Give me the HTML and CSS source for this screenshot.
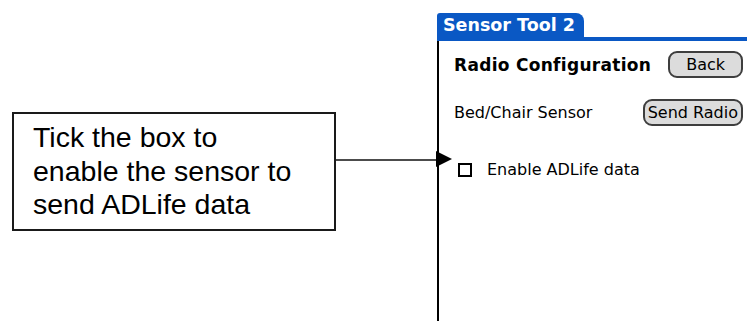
FILE: index.html
```html
<!DOCTYPE html>
<html lang="en">
<head>
  <meta charset="UTF-8">
  <meta name="viewport" content="width=device-width, initial-scale=1.0">
  <title>Sensor Tool 2 - Radio Configuration</title>
  <link rel="stylesheet" href="styles.css">
</head>
<body>

  <div class="scene">

    <!-- Callout -->
    <div class="callout">
      Tick the box to<br>
      enable the sensor to<br>
      send ADLife data
    </div>

    <!-- Arrow pointing at the checkbox -->
    <div class="pointer">
      <svg width="116" height="16" viewBox="0 0 116 16">
        <line x1="0" y1="9" x2="102" y2="9" stroke="#111" stroke-width="1.6"/>
        <polygon points="100,0 116,8 100,16" fill="#000"/>
      </svg>
    </div>

    <!-- Palm screen -->
    <div class="palm">
      <div class="titlebar">
        <span class="tab">Sensor Tool 2</span>
      </div>
      <div class="screen">
        <div class="row row-head">
          <span class="heading">Radio Configuration</span>
          <button type="button" class="palm-btn btn-back">Back</button>
        </div>
        <div class="row row-sensor">
          <span class="label">Bed/Chair Sensor</span>
          <button type="button" class="palm-btn btn-send">Send Radio</button>
        </div>
        <label class="check-row">
          <span class="box"></span>
          <span class="label">Enable ADLife data</span>
        </label>
      </div>
    </div>

  </div>

</body>
</html>
```

FILE: styles.css
```css
body {
  margin: 0;
  padding: 0;
  background: #fff;
  height: 321px;
  overflow: hidden;
}

.scene {
  display: flex;
  align-items: flex-start;
  padding-left: 12px;
}

.callout {
  margin-top: 112px;
  width: 324px;
  height: 119px;
  box-sizing: border-box;
  border: 2px solid #1a1a1a;
  padding: 7px 0 0 19px;
  font-family: "Liberation Sans", Arial, sans-serif;
  font-size: 28.5px;
  line-height: 33.5px;
  color: #000;
}

.pointer {
  margin-top: 151px;
  width: 116px;
  height: 16px;
  margin-right: -15px;
  position: relative;
  z-index: 1;
}

.pointer svg {
  display: block;
}

.palm {
  flex: 1;
  margin-top: 13px;
  font-family: "DejaVu Sans", sans-serif;
  color: #000;
}

.titlebar {
  border-bottom: 4px solid #0a58c4;
  height: 24px;
}

.tab {
  display: inline-block;
  height: 24px;
  line-height: 25px;
  padding: 0 9px 0 6px;
  background: #0a58c4;
  color: #fff;
  font-weight: bold;
  font-size: 17.5px;
  border-radius: 3px 8px 0 0;
}

.screen {
  border-left: 2px solid #000;
  height: 270px;
  padding: 10px 4px 0 15px;
}

.row {
  display: flex;
  align-items: center;
  justify-content: space-between;
}

.heading {
  font-weight: bold;
  font-size: 17px;
  letter-spacing: 0.3px;
}

.label {
  font-size: 16px;
}

.row-sensor {
  margin-top: 21px;
}

.palm-btn {
  height: 27px;
  box-sizing: border-box;
  border: 2px solid #3e3e3e;
  border-radius: 9px;
  background: #dcdcdc;
  font-family: "DejaVu Sans", sans-serif;
  font-size: 16px;
  color: #000;
  padding: 0 3px;
}

.btn-back {
  padding: 0 16px;
}

.check-row {
  display: flex;
  align-items: center;
  margin-top: 34px;
  padding-left: 4px;
}

.box {
  width: 14px;
  height: 14px;
  box-sizing: border-box;
  border: 2px solid #000;
  margin-right: 15px;
}
```
